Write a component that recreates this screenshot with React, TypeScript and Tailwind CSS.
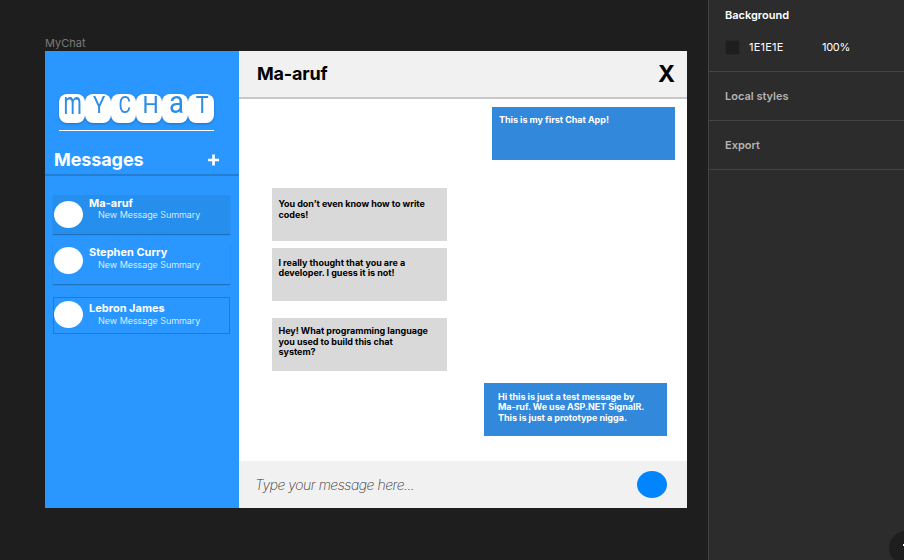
const font = { fontFamily: 'Inter, "Liberation Sans", sans-serif' };

const logoLetters = [
  { char: 'm', className: 'text-[22px] scale-x-[0.95] scale-y-[1.42] -translate-y-[2px]' },
  { char: 'Y', className: 'text-[24px] scale-x-[0.85]' },
  { char: 'C', className: 'text-[24px] scale-x-[0.8]' },
  { char: 'H', className: 'text-[24px] scale-x-[0.95]' },
  { char: 'a', className: 'text-[24px] scale-x-[1.15] scale-y-[1.3] -translate-y-[2px]' },
  { char: 'T', className: 'text-[24px] scale-x-[0.9]' },
];

function Logo() {
  return (
    <div className="ml-[14px] w-[155px] border-b border-white pb-[7px]">
      <div className="flex h-[29px] drop-shadow-[0_1px_1px_rgba(0,0,0,0.25)]">
        {logoLetters.map((l) => (
          <div key={l.char} className="flex h-[29px] flex-1 justify-center rounded-[8px] bg-white pl-[2px]">
            <span
              className={`block h-[23px] whitespace-nowrap leading-[23px] font-normal text-[#2c8ce6] ${l.className}`}
              style={{ fontFamily: 'Roboto, sans-serif' }}
            >
              {l.char}
            </span>
          </div>
        ))}
      </div>
    </div>
  );
}

const contacts = [
  { name: 'Ma-aruf', box: 'mt-[19px] h-[39px] bg-[#268fee] shadow-[0_1px_1px_rgba(0,0,0,0.25)]', avatar: 'mt-[6px] ml-px', text: 'pt-[2px]', gap: '-mt-px' },
  { name: 'Stephen Curry', box: 'mt-[10px] h-[40px] shadow-[0_1px_1px_rgba(0,0,0,0.25)] bg-[#2997ff]', avatar: 'mt-[3px] ml-px', text: 'pt-[2px]', gap: '' },
  { name: 'Lebron James', box: 'mt-[13px] h-[37px] border border-[#217acc]', avatar: 'mt-[3px]', text: 'pt-[4px]', gap: '' },
];

function Sidebar() {
  return (
    <aside className="w-[194px] shrink-0 bg-[#2997ff] pt-[43px] text-white">
      <Logo />
      <div className="mt-[15px] flex h-[30px] items-center justify-between border-b-2 border-[#227dd3] pr-[19px] pl-[9px]">
        <h2 className="text-[18px] leading-[22px] font-bold tracking-[-0.1px]">Messages</h2>
        <svg width="13" height="12" viewBox="0 0 13 12">
          <path d="M6.5 0.5v11M1 6h11" stroke="white" strokeWidth="2.7" />
        </svg>
      </div>
      {contacts.map((c) => (
        <div key={c.name} className={`ml-[8px] flex w-[177px] ${c.box}`}>
          <div className={`h-[27px] w-[29px] shrink-0 rounded-[50%] bg-white ${c.avatar}`} />
          <div className={`ml-[6px] ${c.text}`}>
            <div className="text-[11px] leading-[13px] font-bold">{c.name}</div>
            <div className={`ml-[9px] text-[9px] leading-[12px] font-light tracking-[-0.02px] whitespace-nowrap ${c.gap}`}>New Message Summary</div>
          </div>
        </div>
      ))}
    </aside>
  );
}

type MessageProps = { lines: string[]; className: string };

function Message({ lines, className }: MessageProps) {
  return (
    <div className={`shrink-0 text-[9px] leading-[10.7px] font-bold tracking-[-0.03px] whitespace-nowrap ${className}`}>
      {lines.map((line) => (
        <div key={line}>{line}</div>
      ))}
    </div>
  );
}

function Chat() {
  return (
    <main className="flex w-[448px] flex-col bg-white text-black">
      <header className="flex h-[48px] shrink-0 items-center justify-between border-b-2 border-[#c8c8c8] bg-[#f1f1f1] pr-[12px] pl-[18px]">
        <h1 className="text-[18px] leading-[22px] font-bold tracking-[-0.2px]">Ma-aruf</h1>
        <span className="text-[23px] leading-[24px] font-bold">X</span>
      </header>
      <div className="flex h-[362px] shrink-0 flex-col">
        <Message className="mt-[8px] ml-[253px] h-[53px] w-[183px] bg-[#3288da] pt-[8px] pl-[7px] text-white" lines={['This is my first Chat App!']} />
        <Message className="mt-[28px] ml-[33px] h-[53px] w-[175px] bg-[#d9d9d9] pt-[11px] pl-[6.5px]" lines={['You don’t even know how to write', 'codes!']} />
        <Message className="mt-[7px] ml-[33px] h-[53px] w-[175px] bg-[#d9d9d9] pt-[9.5px] pl-[6.5px]" lines={['I really thought that you are a', 'developer. I guess it is not!']} />
        <Message className="mt-[17px] ml-[33px] h-[53px] w-[175px] bg-[#d9d9d9] pt-[8px] pl-[6.5px]" lines={['Hey! What programming language', 'you used to build this chat', 'system?']} />
        <Message className="mt-[12px] ml-[245px] h-[53px] w-[183px] bg-[#3288da] pt-[8.5px] pl-[14px] text-white" lines={['Hi this is just a test message by', 'Ma-ruf. We use ASP.NET SignalR.', 'This is just a prototype nigga.']} />
      </div>
      <footer className="flex h-[47px] items-center justify-between bg-[#f1f1f1] pr-[20px] pl-[16px]">
        <span className="text-[14px] leading-[18px] font-extralight tracking-[-0.46px] text-[#333] italic">Type your message here...</span>
        <div className="h-[27px] w-[30px] rounded-[50%] bg-[#0085ff]" />
      </footer>
    </main>
  );
}

function Inspector() {
  return (
    <aside className="relative w-[196px] shrink-0 overflow-hidden border-l border-[#444] bg-[#2c2c2c] text-[11px] leading-[16px] text-white">
      <section className="h-[72px] border-b border-[#444] pt-[7px] pl-[16px]">
        <div className="font-semibold">Background</div>
        <div className="mt-[16px] flex items-center">
          <div className="h-[15px] w-[15px] border border-[#272727] bg-[#1e1e1e]" />
          <span className="ml-[9px] w-[73px] tracking-[0.2px]">1E1E1E</span>
          <span className="tracking-[-0.3px]">100%</span>
        </div>
      </section>
      <section className="flex h-[49px] items-center border-b border-[#444] pl-[16px] font-semibold text-[#b3b3b3]">Local styles</section>
      <section className="flex h-[49px] items-center border-b border-[#444] pl-[16px] font-semibold text-[#b3b3b3]">Export</section>
      <div className="absolute top-[531px] left-[180px] h-[34px] w-[34px] rounded-full bg-[#1e1e1e]">
        <div className="mt-[13px] ml-[14px] h-[2px] w-[2px] bg-white" />
      </div>
    </aside>
  );
}

export default function App() {
  return (
    <div className="flex h-[560px] w-[904px] overflow-hidden bg-[#1e1e1e]" style={font}>
      <div className="flex-1 pt-[36px] pl-[45px]">
        <div className="h-[15px] text-[11px] leading-[14px] text-[#7a7a7a]">MyChat</div>
        <div className="flex h-[457px] w-[642px]">
          <Sidebar />
          <Chat />
        </div>
      </div>
      <Inspector />
    </div>
  );
}
